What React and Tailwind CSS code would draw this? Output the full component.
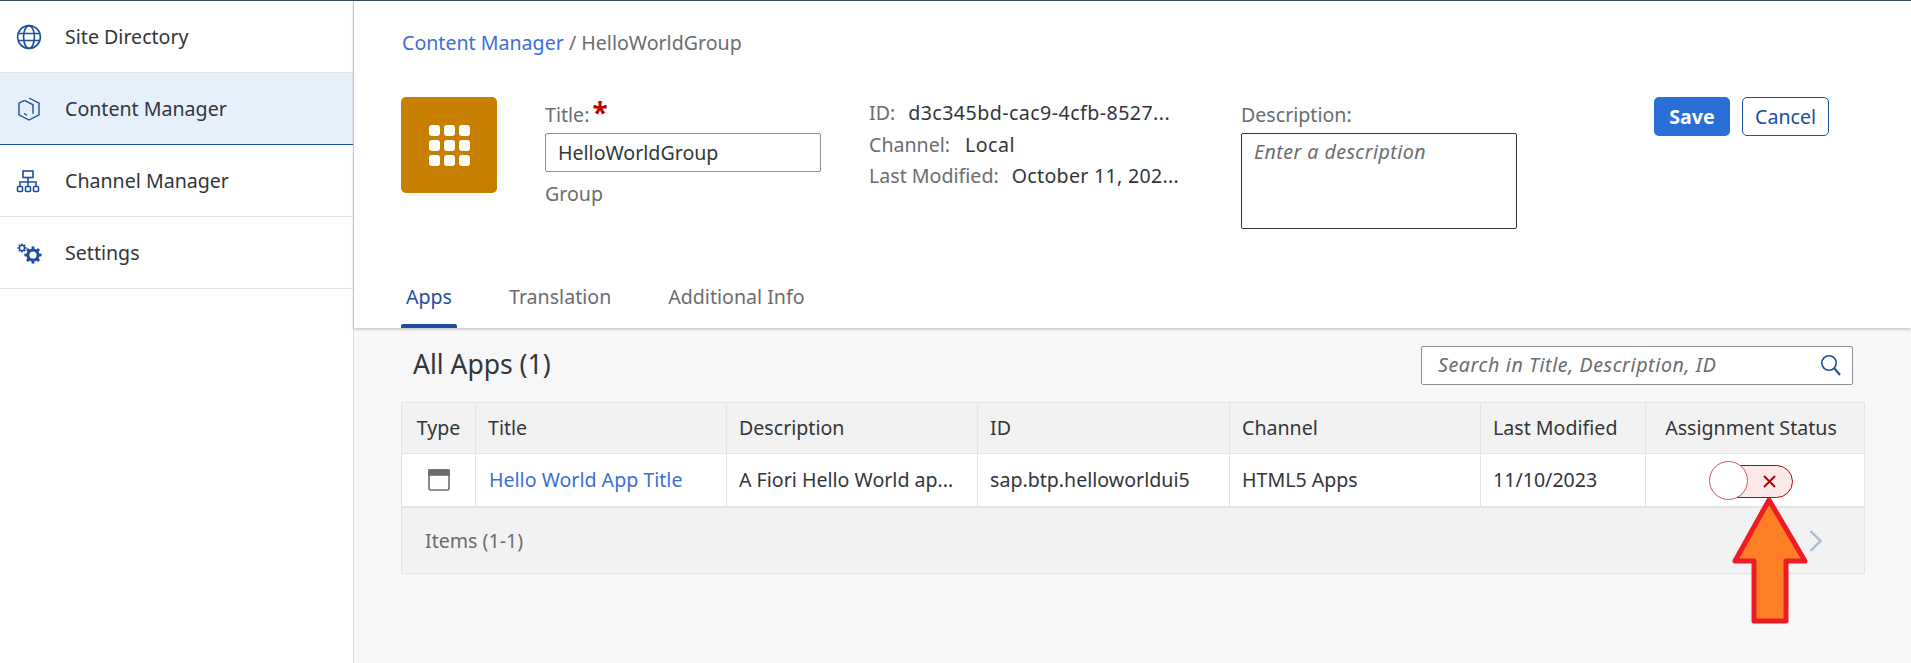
import React from 'react';

const navItems = [
  { name: 'Site Directory', icon: 'globe' },
  { name: 'Content Manager', icon: 'cube', active: true },
  { name: 'Channel Manager', icon: 'tree' },
  { name: 'Settings', icon: 'gears' },
];

const columns = [
  { name: 'Type', center: true },
  { name: 'Title' },
  { name: 'Description' },
  { name: 'ID' },
  { name: 'Channel' },
  { name: 'Last Modified' },
  { name: 'Assignment Status', center: true, shift: true },
];

const gridCols = 'grid grid-cols-[73px_251px_251px_252px_251px_165px_219px]';

function Gear({ cx, cy, r, hole, width }) {
  const teeth = [0, 45, 90, 135, 180, 225, 270, 315];
  return (
    <g>
      {teeth.map(a => (
        <rect key={a} x={cx - width / 2} y={cy - r - width * 0.7} width={width} height={width} fill="#1d4f9c" transform={`rotate(${a} ${cx} ${cy})`} />
      ))}
      <circle cx={cx} cy={cy} r={(r + hole) / 2} fill="none" stroke="#1d4f9c" strokeWidth={r - hole} />
    </g>
  );
}

function NavIcon({ type }) {
  if (type === 'globe') {
    return (
      <svg width="26" height="26" viewBox="0 0 26 26" fill="none" stroke="#1d4f9c" strokeWidth="1.6">
        <circle cx="13" cy="13" r="11.4" />
        <ellipse cx="13" cy="13" rx="5.4" ry="11.4" />
        <path d="M2.5 9.5h21M2.5 16.5h21" />
      </svg>
    );
  }
  if (type === 'cube') {
    return (
      <svg width="26" height="26" viewBox="0 0 26 26" fill="none" stroke="#1d4f9c" strokeWidth="1.4">
        <path d="M13 2l10 5.2v11.6L13 24 3 18.8V7.2L8.5 4.4" />
        <path d="M8.5 4.4L17 8.8v9M8 17.5l3 1.6" />
      </svg>
    );
  }
  if (type === 'tree') {
    return (
      <svg width="24" height="24" viewBox="0 0 24 24" fill="none" stroke="#1d4f9c" strokeWidth="1.6">
        <rect x="7" y="2" width="10" height="6.5" />
        <path d="M12 8.5v4.5M4 17v-4h16v4M12 13v4" />
        <rect x="1.5" y="17.5" width="5" height="5" rx="1" />
        <rect x="9.5" y="17.5" width="5" height="5" rx="1" />
        <rect x="17.5" y="17.5" width="5" height="5" rx="1" />
      </svg>
    );
  }
  return (
    <svg width="26" height="26" viewBox="0 0 26 26">
      <Gear cx={17} cy={15} r={6.6} hole={3.6} width={2.8} />
      <Gear cx={6} cy={8} r={3.4} hole={1.9} width={1.6} />
    </svg>
  );
}

function Toggle() {
  return (
    <div className="flex items-center relative w-[84px] h-[39px]">
      <div className="absolute left-[10px] right-0 top-[4px] h-[33px] rounded-full border border-[#bb0000] bg-[#fbe9e9] flex items-center justify-end pr-[16px]">
        <svg width="13" height="13" viewBox="0 0 13 13" stroke="#bb0000" strokeWidth="2">
          <path d="M1 1l11 11M12 1L1 12" />
        </svg>
      </div>
      <div className="absolute left-0 top-0 w-[39px] h-[39px] rounded-full border border-[#c9565b] bg-white" />
    </div>
  );
}

export default function App() {
  return (
    <div className="relative w-full h-[663px] overflow-hidden flex border-t border-[#354a5f] text-[#32363a] text-[19.6px] font-['Noto_Sans',sans-serif]">
      <aside className="w-[354px] shrink-0 bg-white border-r border-[#d9d9d9]">
        {navItems.map(item => (
          <div
            key={item.name}
            className={`h-[72px] flex items-center border-b ${item.active ? 'bg-[#e5f0fa] border-[#1d4f9c]' : 'border-[#e4e4e4]'}`}
          >
            <div className="w-[65px] pl-[16px] flex items-center">
              <NavIcon type={item.icon} />
            </div>
            <span>{item.name}</span>
          </div>
        ))}
      </aside>

      <main className="flex-1 bg-[#f7f7f7] flex flex-col">
        <header className="h-[327px] shrink-0 bg-white shadow-[0_1px_3px_rgba(0,0,0,0.25)] pl-[47px] flex flex-col">
          <div className="h-[96px] pt-[30px] pl-[1px] leading-[24px]">
            <span className="text-[#3a6fd8]">Content Manager</span>
            <span className="text-[#6a6d70]"> / HelloWorldGroup</span>
          </div>

          <div className="flex h-[146px]">
            <div className="w-[96px] h-[96px] rounded-[5px] bg-[#c87f00] flex items-center justify-center">
              <div className="grid grid-cols-3 gap-[4px]">
                {[1, 2, 3, 4, 5, 6, 7, 8, 9].map(n => (
                  <div key={n} className="w-[11px] h-[11px] rounded-[3px] bg-white" />
                ))}
              </div>
            </div>

            <div className="ml-[48px] w-[276px]">
              <div className="h-[36px] flex items-center text-[#6a6d70]">
                Title:<span className="text-[#bb0000] text-[28px] font-bold leading-none ml-[3px] -mt-[6px]">*</span>
              </div>
              <div className="h-[39px] border border-[#89919a] rounded-[2px] flex items-center pl-[12px]">HelloWorldGroup</div>
              <div className="mt-[10px] leading-[24px] text-[#6a6d70]">Group</div>
            </div>

            <div className="ml-[48px] w-[372px] flex flex-col gap-[8px] pt-[4px]">
              <div className="leading-[24px]"><span className="text-[#6a6d70]">ID:</span><span className="ml-[13px] tracking-[0.45px]">d3c345bd-cac9-4cfb-8527...</span></div>
              <div className="leading-[24px]"><span className="text-[#6a6d70]">Channel:</span><span className="ml-[15px] tracking-[0.45px]">Local</span></div>
              <div className="leading-[24px] -mt-[1px]"><span className="text-[#6a6d70]">Last Modified:</span><span className="ml-[13px] tracking-[0.3px]">October 11, 202...</span></div>
            </div>

            <div className="w-[276px]">
              <div className="h-[36px] flex items-center text-[#6a6d70]">Description:</div>
              <div className="h-[96px] border border-[#32363a] rounded-[2px] px-[12px] py-[6px] italic tracking-[0.45px] text-[#6a6d70] leading-[24px]">Enter a description</div>
            </div>

            <div className="ml-[137px] flex gap-[12px] h-[39px]">
              <div className="w-[76px] rounded-[5px] bg-[#2a6fd6] text-white font-bold flex items-center justify-center">Save</div>
              <div className="w-[87px] rounded-[5px] border border-[#1d4f9c] text-[#1d4f9c] flex items-center justify-center">Cancel</div>
            </div>
          </div>

          <div className="flex flex-1 text-[#6a6d70] leading-[24px]">
            <div className="w-[56px] flex flex-col items-center">
              <span className="flex-1 pt-[42px] text-[#1d4f9c]">Apps</span>
              <div className="w-full h-[4px] rounded-t-[2px] bg-[#1d4f9c]" />
            </div>
            <span className="ml-[52px] pt-[42px]">Translation</span>
            <span className="ml-[57px] pt-[42px]">Additional Info</span>
          </div>
        </header>

        <div className="pl-[47px] w-[1511px]">
          <div className="h-[74px] flex items-center justify-between pl-[12px] pr-[12px]">
            <span className="text-[26.5px]">All Apps (1)</span>
            <div className="w-[432px] h-[39px] bg-white border border-[#89919a] rounded-[2px] flex items-center justify-between pl-[16px] pr-[10px] italic tracking-[0.6px] text-[#6a6d70]">
              Search in Title, Description, ID
              <svg width="22" height="22" viewBox="0 0 22 22" fill="none" stroke="#1d4f9c" strokeWidth="1.6">
                <circle cx="9" cy="9" r="7.2" />
                <path d="M14 14l6 7" strokeWidth="2" />
              </svg>
            </div>
          </div>

          <div className={`${gridCols} h-[52px] bg-[#f2f2f2] border border-[#e4e4e4]`}>
            {columns.map((col, i) => (
              <div key={col.name} className={`flex items-center pl-[12px] whitespace-nowrap ${col.shift ? 'pr-[20px]' : 'pr-[12px]'} ${col.center ? 'justify-center' : ''} ${i > 0 ? 'border-l border-[#e4e4e4]' : ''}`}>
                {col.name}
              </div>
            ))}
          </div>

          <div className={`${gridCols} h-[54px] bg-white border-x border-b-2 border-[#e4e4e4]`}>
            <div className="flex items-center justify-center">
              <svg width="22" height="22" viewBox="0 0 22 22" fill="none" stroke="#6a6d70" strokeWidth="1.6">
                <rect x="1" y="1" width="20" height="20" rx="2" />
                <rect x="1" y="1" width="20" height="5" fill="#6a6d70" />
              </svg>
            </div>
            <div className="flex items-center pl-[13px] pr-[12px] border-l border-[#e4e4e4] text-[#3a6fd8]">Hello World App Title</div>
            <div className="flex items-center px-[12px] border-l border-[#e4e4e4]">A Fiori Hello World ap...</div>
            <div className="flex items-center px-[12px] border-l border-[#e4e4e4]">sap.btp.helloworldui5</div>
            <div className="flex items-center px-[12px] border-l border-[#e4e4e4]">HTML5 Apps</div>
            <div className="flex items-center px-[12px] border-l border-[#e4e4e4]">11/10/2023</div>
            <div className="flex items-center justify-center pr-[8px] border-l border-[#e4e4e4]"><Toggle /></div>
          </div>

          <div className="h-[66px] bg-[#f2f2f2] border border-t-0 border-[#e4e4e4] flex items-center justify-between pl-[23px] pr-[42px] text-[#6a6d70]">
            Items (1-1)
            <svg width="13" height="22" viewBox="0 0 13 22" fill="none" stroke="#a9bcd8" strokeWidth="2.4">
              <path d="M1.5 1l10 10-10 10" />
            </svg>
          </div>
        </div>
      </main>

      <svg className="absolute left-[1728px] top-[492px]" width="82" height="136" viewBox="0 0 82 136">
        <path d="M41 7L7 68h19v60h32V68h19z" fill="#ff7f27" stroke="#ed1c24" strokeWidth="5" strokeLinejoin="round" />
      </svg>
    </div>
  );
}
